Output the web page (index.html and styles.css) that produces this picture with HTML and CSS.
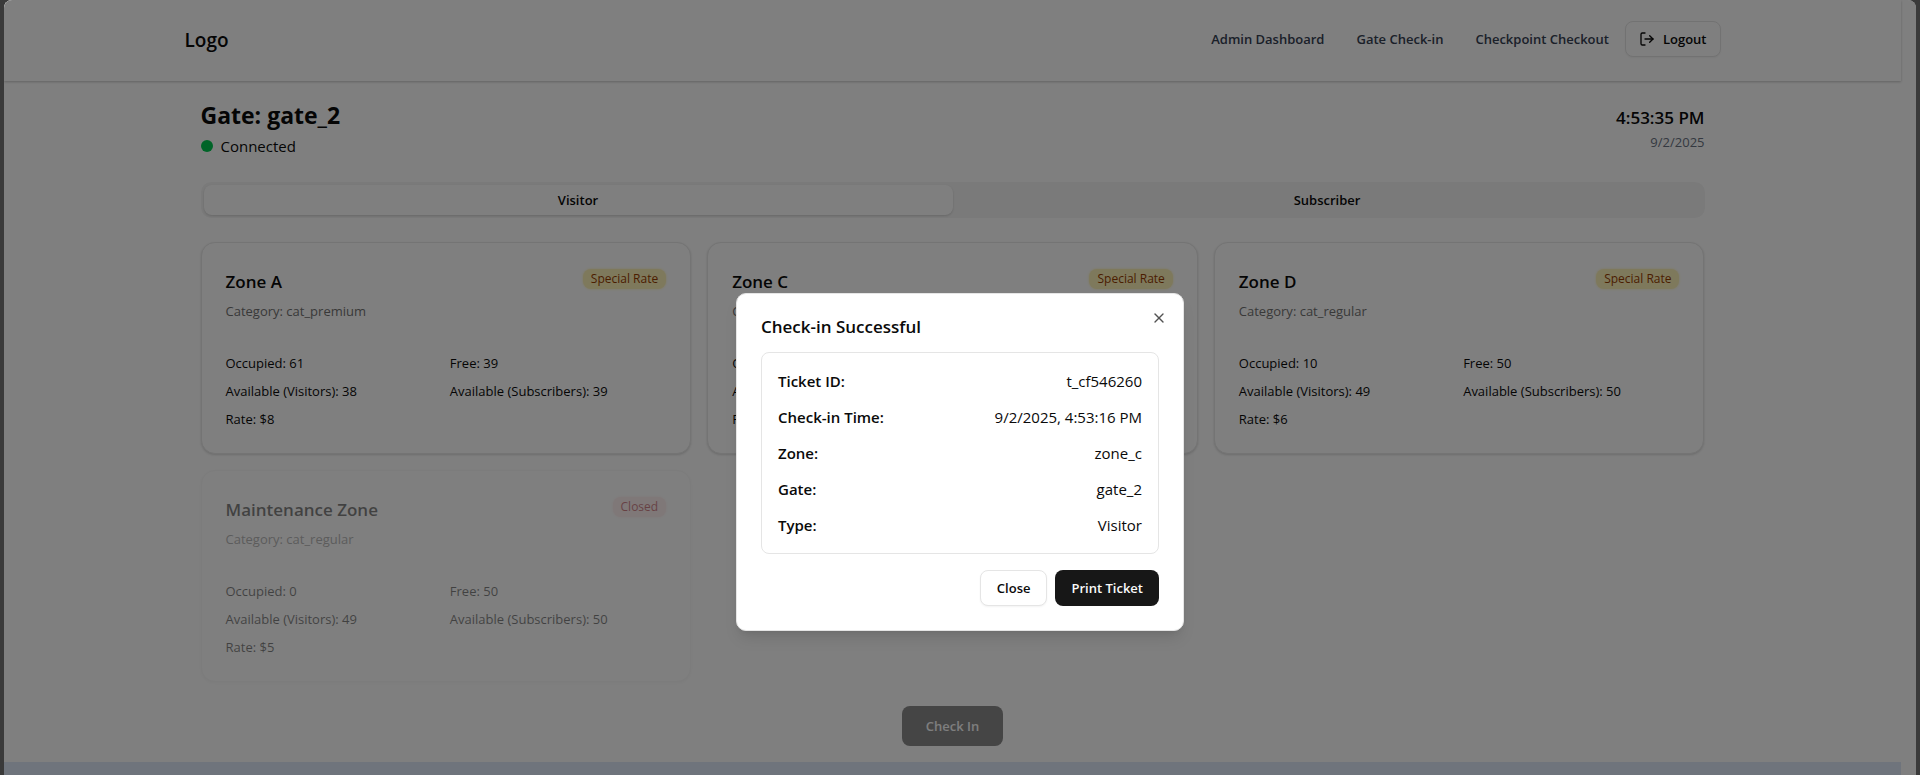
FILE: index.html
```html
<!DOCTYPE html>
<html lang="en">
<head>
<meta charset="utf-8">
<title>Gate Check-in</title>
<link rel="stylesheet" href="styles.css">
</head>
<body>
<div class="window">
  <div class="page">
    <header class="site-header">
      <div class="container header-row">
        <a class="logo" href="#">Logo</a>
        <nav class="nav">
          <div class="nav-links">
            <a href="#">Admin Dashboard</a>
            <a href="#">Gate Check-in</a>
            <a href="#">Checkpoint Checkout</a>
          </div>
          <button class="btn btn-outline btn-icon" type="button">
            <svg class="icon" viewBox="0 0 24 24"><path d="m16 17 5-5-5-5"/><path d="M21 12H9"/><path d="M9 21H5a2 2 0 0 1-2-2V5a2 2 0 0 1 2-2h4"/></svg>
            Logout
          </button>
        </nav>
      </div>
    </header>

    <main class="container main">
      <div class="gate-head">
        <div>
          <h1>Gate: gate_2</h1>
          <p class="status"><span class="dot"></span>Connected</p>
        </div>
        <div class="clock">
          <p class="time">4:53:35 PM</p>
          <p class="date">9/2/2025</p>
        </div>
      </div>

      <div class="tabs" role="tablist">
        <button class="tab tab-active" type="button" role="tab" aria-selected="true">Visitor</button>
        <button class="tab" type="button" role="tab" aria-selected="false">Subscriber</button>
      </div>

      <div class="zones">
        <section class="card">
          <div class="card-head"><h2>Zone A</h2><span class="badge badge-special">Special Rate</span></div>
          <p class="category">Category: cat_premium</p>
          <div class="stats"><span>Occupied: 61</span><span>Free: 39</span><span>Available (Visitors): 38</span><span>Available (Subscribers): 39</span><span>Rate: $8</span></div>
        </section>
        <section class="card">
          <div class="card-head"><h2>Zone C</h2><span class="badge badge-special">Special Rate</span></div>
          <p class="category">Category: cat_economy</p>
          <div class="stats"><span>Occupied: 31</span><span>Free: 69</span><span>Available (Visitors): 68</span><span>Available (Subscribers): 69</span><span>Rate: $3</span></div>
        </section>
        <section class="card">
          <div class="card-head"><h2>Zone D</h2><span class="badge badge-special">Special Rate</span></div>
          <p class="category">Category: cat_regular</p>
          <div class="stats"><span>Occupied: 10</span><span>Free: 50</span><span>Available (Visitors): 49</span><span>Available (Subscribers): 50</span><span>Rate: $6</span></div>
        </section>
        <section class="card card-closed">
          <div class="card-head"><h2>Maintenance Zone</h2><span class="badge badge-closed">Closed</span></div>
          <p class="category">Category: cat_regular</p>
          <div class="stats"><span>Occupied: 0</span><span>Free: 50</span><span>Available (Visitors): 49</span><span>Available (Subscribers): 50</span><span>Rate: $5</span></div>
        </section>
      </div>

      <button class="btn btn-primary btn-large" type="button" disabled>Check In</button>
    </main>
    <footer class="footer"></footer>
  </div>

  <div class="overlay">
    <div class="dialog" role="dialog" aria-modal="true" aria-labelledby="dialog-title">
      <h2 id="dialog-title">Check-in Successful</h2>
      <button class="dialog-x" type="button" aria-label="Close dialog">
        <svg class="icon" viewBox="0 0 24 24"><path d="M18 6 6 18"/><path d="m6 6 12 12"/></svg>
      </button>
      <dl class="ticket">
        <div><dt>Ticket ID:</dt><dd>t_cf546260</dd></div>
        <div><dt>Check-in Time:</dt><dd>9/2/2025, 4:53:16 PM</dd></div>
        <div><dt>Zone:</dt><dd>zone_c</dd></div>
        <div><dt>Gate:</dt><dd>gate_2</dd></div>
        <div><dt>Type:</dt><dd>Visitor</dd></div>
      </dl>
      <div class="actions">
        <button class="btn btn-outline" type="button">Close</button>
        <button class="btn btn-primary" type="button">Print Ticket</button>
      </div>
    </div>
  </div>
</div>
</body>
</html>
```

FILE: styles.css
```css
* { box-sizing: border-box; margin: 0; padding: 0; }

body {
  background: #3a3a3a;
  color: #0a0a0a;
  font-family: "Open Sans", "Noto Sans", sans-serif;
  font-size: 15px;
  line-height: 24px;
}

a { color: inherit; text-decoration: none; }
button { font: inherit; color: inherit; border: 0; background: none; }

.window {
  position: relative;
  min-height: 100vh;
  margin: 0 4px;
  background: #fff;
  border-radius: 8px 8px 0 0;
  overflow: hidden;
}

.page {
  display: flex;
  flex-direction: column;
  min-height: 100vh;
  margin-right: 15px;
}

.container {
  width: 100%;
  max-width: 1536px;
  margin: 0 auto;
}

.icon {
  width: 16px;
  height: 16px;
  fill: none;
  stroke: currentColor;
  stroke-width: 2;
  stroke-linecap: round;
  stroke-linejoin: round;
}

/* Header */
.site-header {
  padding: 21px 0 24px;
  background: #fff;
  box-shadow: 0 1px 3px rgba(0, 0, 0, 0.12), 0 1px 2px rgba(0, 0, 0, 0.12);
}

.header-row {
  display: flex;
  align-items: center;
  justify-content: space-between;
}

.logo { padding-top: 2px; font-size: 19px; font-weight: 600; }

.nav {
  display: flex;
  align-items: center;
  gap: 16px;
}

.nav-links {
  display: flex;
  gap: 32px;
  color: #364153;
  font-size: 13px;
  font-weight: 600;
}

/* Buttons */
.btn {
  display: flex;
  align-items: center;
  justify-content: center;
  gap: 8px;
  height: 36px;
  padding: 0 16px;
  border-radius: 8px;
  font-size: 13px;
  font-weight: 600;
  line-height: 20px;
}

.btn-outline {
  border: 1px solid #e5e5e5;
  background: #fff;
  box-shadow: 0 1px 2px rgba(0, 0, 0, 0.05);
}

.btn-icon { padding: 0 13px; }
.btn-primary { background: #171717; color: #fafafa; }
.btn-large { height: 40px; padding: 0 24px; margin: 0 auto; }
.btn:disabled { opacity: 0.5; }

/* Gate page */
.main { padding: 17px 16px 16px; }

.gate-head {
  display: flex;
  align-items: center;
  justify-content: space-between;
  margin-bottom: 24px;
}

h1 { font-size: 23px; font-weight: 700; line-height: 34px; }

.status {
  display: flex;
  align-items: center;
  gap: 8px;
  margin-top: 2px;
}

.dot {
  width: 12px;
  height: 12px;
  border-radius: 50%;
  background: #00c950;
}

.clock { text-align: right; }
.time { font-size: 17px; font-weight: 600; line-height: 28px; }
.date { color: #6a7282; font-size: 13px; line-height: 20px; }

.tabs {
  display: grid;
  grid-template-columns: 1fr 1fr;
  height: 36px;
  margin-bottom: 24px;
  padding: 3px;
  border-radius: 10px;
  background: #f5f5f5;
}

.tab {
  border-radius: 8px;
  font-size: 13px;
  font-weight: 600;
  line-height: 20px;
}

.tab-active {
  background: #fff;
  box-shadow: 0 1px 3px rgba(0, 0, 0, 0.1), 0 1px 2px rgba(0, 0, 0, 0.06);
}

.zones {
  display: grid;
  grid-template-columns: repeat(3, 1fr);
  gap: 16px;
  margin-bottom: 24px;
}

.card {
  padding: 24px;
  border: 1px solid #e8e8e8;
  border-radius: 14px;
  background: #fff;
  box-shadow: 0 1px 3px rgba(0, 0, 0, 0.1), 0 1px 2px rgba(0, 0, 0, 0.06);
}

.card-closed {
  border-color: #f2f2f2;
  box-shadow: 0 1px 3px rgba(0, 0, 0, 0.06);
  opacity: 0.5;
}

.card-head {
  display: flex;
  align-items: flex-start;
  justify-content: space-between;
}

h2 { font-size: 17px; font-weight: 600; line-height: 30px; }

.badge {
  margin-top: 2px;
  padding: 0 8px;
  border-radius: 8px;
  font-size: 12px;
  line-height: 20px;
}

.badge-special { background: #fdf2b8; color: #973c00; box-shadow: 0 0 3px #fdf2b8; }
.badge-closed { background: #ffe2e2; color: #9f0712; box-shadow: 0 0 3px #ffe2e2; }

.category {
  margin: 4px 0 32px;
  color: #737373;
  font-size: 13px;
  line-height: 20px;
}

.stats {
  display: grid;
  grid-template-columns: 1fr 1fr;
  gap: 8px;
  font-size: 13px;
  line-height: 20px;
}

.footer { flex: 1; background: #dfe9f9; }

/* Check-in dialog */
.overlay {
  position: absolute;
  inset: 0;
  padding: 293px 16px 16px;
  background: rgba(0, 0, 0, 0.5);
}

.dialog {
  position: relative;
  display: grid;
  gap: 16px;
  max-width: 448px;
  margin: 0 auto;
  padding: 24px;
  border: 1px solid #e5e5e5;
  border-radius: 10px;
  background: #fff;
  box-shadow: 0 10px 15px -3px rgba(0, 0, 0, 0.1), 0 4px 6px -4px rgba(0, 0, 0, 0.1);
}

.dialog h2 { line-height: 18px; }

.dialog-x {
  position: absolute;
  top: 16px;
  right: 16px;
  height: 16px;
  line-height: 0;
  opacity: 0.7;
}

.ticket {
  display: grid;
  gap: 12px;
  padding: 16px;
  border: 1px solid #e5e5e5;
  border-radius: 8px;
}

.ticket div { display: flex; justify-content: space-between; }
.ticket dt { font-weight: 600; }

.actions {
  display: flex;
  justify-content: flex-end;
  gap: 8px;
}
```
